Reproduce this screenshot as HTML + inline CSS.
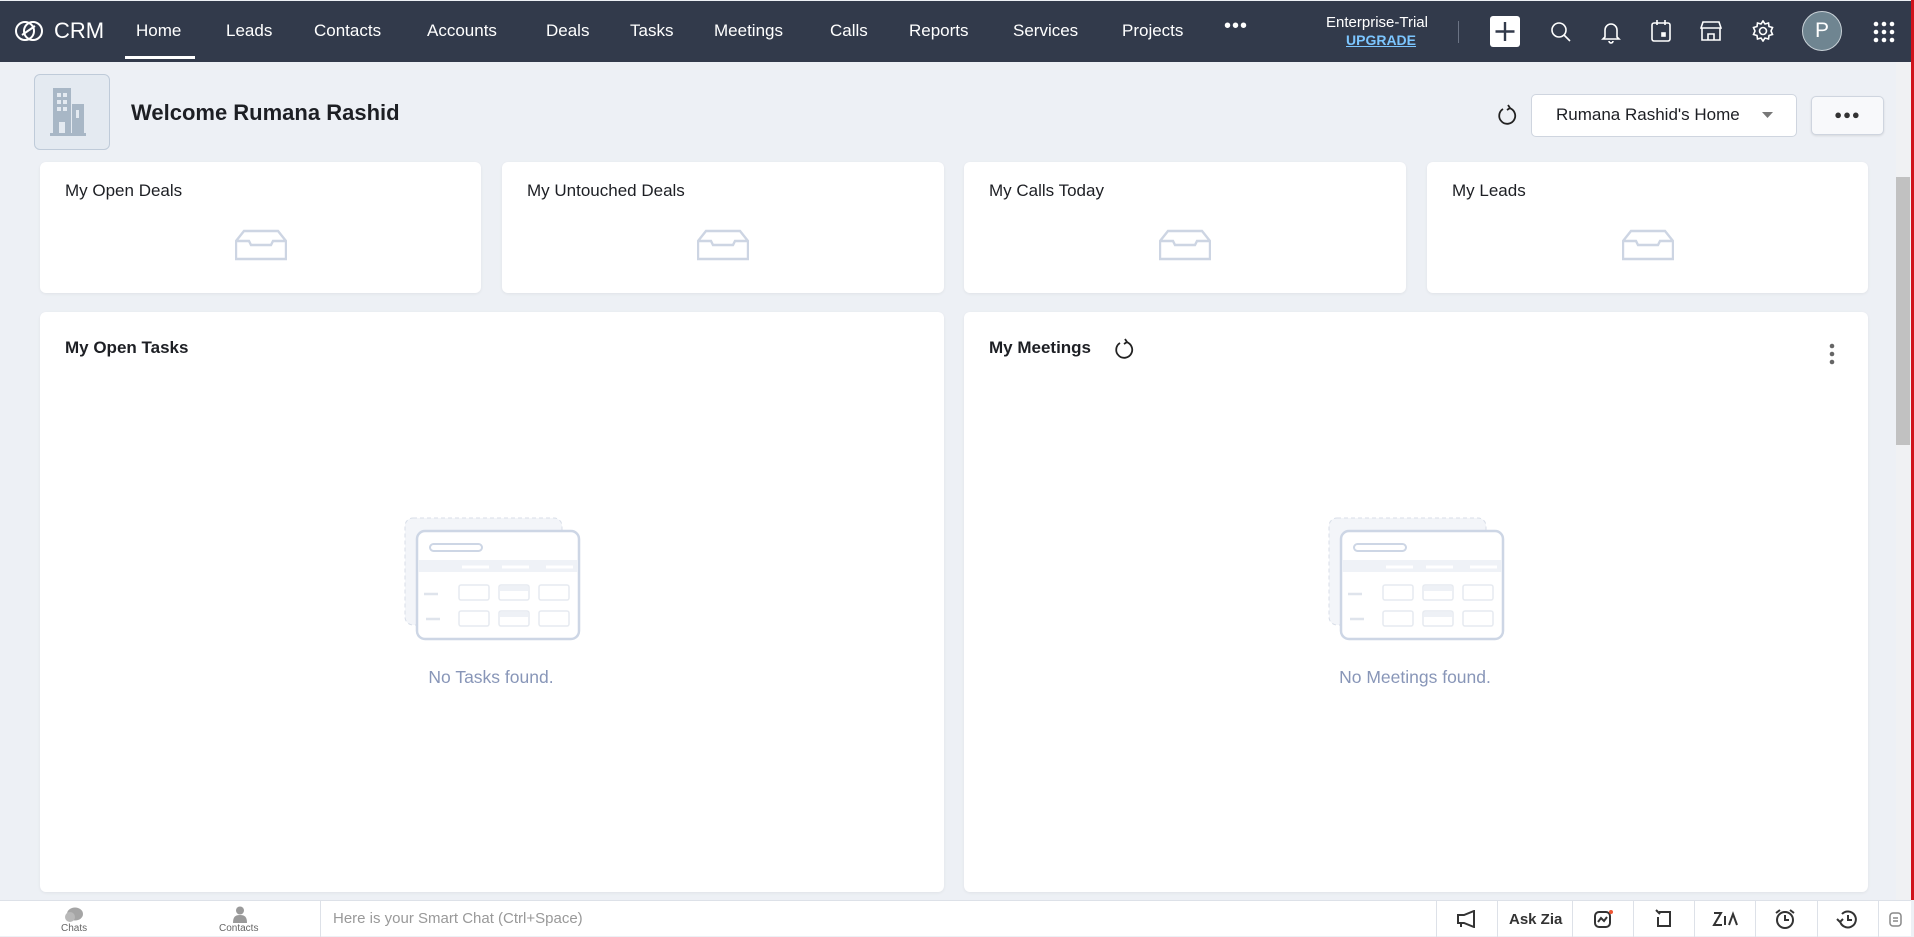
<!DOCTYPE html>
<html><head><meta charset="utf-8"><style>
*{box-sizing:border-box;margin:0;padding:0}
body{width:1914px;height:936px;overflow:hidden;font-family:"Liberation Sans",sans-serif;background:#edf0f5;position:relative;color:#1d1f24}
.top{position:absolute;left:0;top:1px;width:1911px;height:61px;background:#323a4b;color:#fff}
.top .t{position:absolute;top:20px;font-size:17px;color:#fff}
.ab{position:absolute}
.card{position:absolute;background:#fff;border-radius:6px;box-shadow:0 1px 3px rgba(0,0,0,.06)}
.card h3{position:absolute;left:25px;font-size:17px;font-weight:normal;color:#1d1f24}
.empty{position:absolute;font-size:17.5px;color:#8896b8;width:300px;text-align:center}
.bb{position:absolute;top:900px;left:0;width:1911px;height:36px;background:#fff;border-top:1px solid #dde1e8}
.div{position:absolute;top:0;width:1px;height:36px;background:#dde1e8}
</style></head><body>
<div class="top">
 <svg class="ab" style="left:14px;top:18px" width="30" height="24" viewBox="0 0 30 24" fill="none" stroke="#fff" stroke-width="2"><ellipse cx="11" cy="12" rx="9" ry="9"/><ellipse cx="19" cy="12" rx="9" ry="9"/><path d="M8 16 L21 7"/></svg>
 <div class="t" style="left:54px;top:17px;font-size:22px">CRM</div>
 <div class="t" style="left:136px">Home</div>
 <div class="ab" style="left:125px;top:55px;width:70px;height:3px;background:#fff"></div>
 <div class="t" style="left:226px">Leads</div>
 <div class="t" style="left:314px">Contacts</div>
 <div class="t" style="left:427px">Accounts</div>
 <div class="t" style="left:546px">Deals</div>
 <div class="t" style="left:630px">Tasks</div>
 <div class="t" style="left:714px">Meetings</div>
 <div class="t" style="left:830px">Calls</div>
 <div class="t" style="left:909px">Reports</div>
 <div class="t" style="left:1013px">Services</div>
 <div class="t" style="left:1122px">Projects</div>
 <div class="t" style="left:1224px;top:14px;font-size:20px;letter-spacing:1px">•••</div>
 <div class="ab" style="left:1326px;top:13px;font-size:15px">Enterprise-Trial</div>
 <div class="ab" style="left:1346px;top:31px;font-size:14px;font-weight:bold;color:#7cc6ff;text-decoration:underline">UPGRADE</div>
 <div class="ab" style="left:1458px;top:20px;width:1px;height:22px;background:#6b7384"></div>
 <div class="ab" style="left:1490px;top:15px;width:30px;height:31px;background:#fff;border-radius:3px"></div>
 <svg class="ab" style="left:1490px;top:15px" width="30" height="31"><path d="M15 6v19M5.5 15.5h19" stroke="#323a4b" stroke-width="2.4"/></svg>
 <svg class="ab" style="left:1550px;top:20px" width="22" height="22" fill="none" stroke="#fff" stroke-width="1.6"><circle cx="9" cy="9" r="7"/><path d="M14 14l6 6"/></svg>
 <svg class="ab" style="left:1601px;top:19px" width="20" height="24" fill="none" stroke="#fff" stroke-width="1.6"><path d="M4 17V10a6 6 0 0 1 12 0v7l2 2H2z M8 21a2 2 0 0 0 4 0"/></svg>
 <svg class="ab" style="left:1650px;top:18px" width="22" height="24" fill="none" stroke="#fff" stroke-width="1.6"><rect x="2" y="4" width="18" height="18" rx="2"/><path d="M7 1v5M15 1v5"/><rect x="12" y="14" width="3" height="3" fill="#fff"/></svg>
 <svg class="ab" style="left:1700px;top:19px" width="22" height="22" fill="none" stroke="#fff" stroke-width="1.6"><path d="M3 2h16l2 6H1z M2 8v12h18V8 M8 20v-6h6v6"/></svg>
 <svg class="ab" style="left:1752px;top:19px" width="22" height="22" fill="none" stroke="#fff" stroke-width="1.6"><circle cx="11" cy="11" r="3.5"/><path d="M11 1l2 3 3.5-1 .5 3.5 3.5 1-1.5 3.5 1.5 3.5-3.5 1-.5 3.5-3.5-1-2 3-2-3-3.5 1-.5-3.5-3.5-1L3 11 1.5 7.5l3.5-1 .5-3.5 3.5 1z"/></svg>
 <div class="ab" style="left:1802px;top:10px;width:40px;height:40px;border-radius:50%;background:#6f8591;border:1.5px solid #c9d2d8;color:#fff;font-size:21px;text-align:center;line-height:37px">P</div>
 <svg class="ab" style="left:1873px;top:20px" width="22" height="22" fill="#fff"><circle cx="3" cy="3" r="2.3"/><circle cx="11" cy="3" r="2.3"/><circle cx="19" cy="3" r="2.3"/><circle cx="3" cy="11" r="2.3"/><circle cx="11" cy="11" r="2.3"/><circle cx="19" cy="11" r="2.3"/><circle cx="3" cy="19" r="2.3"/><circle cx="11" cy="19" r="2.3"/><circle cx="19" cy="19" r="2.3"/></svg>
</div>
<div class="ab" style="left:1911px;top:0;width:3px;height:900px;background:#d0121b"></div>
<div class="ab" style="left:1896px;top:62px;width:15px;height:838px;background:#f0f1f3"></div>
<div class="ab" style="left:1896px;top:177px;width:14px;height:268px;background:#c1c1c1"></div>

<div class="ab" style="left:34px;top:74px;width:76px;height:76px;border:1px solid #bfcbd9;border-radius:6px;background:#e4eaf1"></div>
<svg class="ab" style="left:50px;top:88px" width="44" height="48" fill="#a8b7c6"><rect x="3" y="0" width="18" height="46"/><rect x="22" y="16" width="12" height="30"/><rect x="0" y="45" width="36" height="3"/><g fill="#e4eaf1"><rect x="7" y="5" width="4" height="4"/><rect x="13" y="5" width="4" height="4"/><rect x="7" y="12" width="4" height="4"/><rect x="13" y="12" width="4" height="4"/><rect x="7" y="19" width="4" height="4"/><rect x="13" y="19" width="4" height="4"/><rect x="9" y="34" width="6" height="11"/><rect x="26" y="22" width="3" height="8"/></g></svg>
<div class="ab" style="left:131px;top:100px;font-size:22px;font-weight:bold;color:#1d1f24">Welcome Rumana Rashid</div>

<svg class="ab" style="left:1496px;top:104px" width="22" height="24" fill="none" stroke="#222" stroke-width="1.8"><path d="M7 5a8 8 0 1 0 6-1"/><path d="M12 1l2 3-3 2"/></svg>
<div class="ab" style="left:1531px;top:94px;width:266px;height:43px;background:#fff;border:1px solid #cfd5df;border-radius:5px"></div>
<div class="ab" style="left:1556px;top:105px;font-size:17px">Rumana Rashid's Home</div>
<svg class="ab" style="left:1762px;top:112px" width="12" height="8"><path d="M0 0h11L5.5 6z" fill="#777"/></svg>
<div class="ab" style="left:1811px;top:96px;width:73px;height:39px;background:#f8f9fb;border:1px solid #cfd5df;border-radius:5px;box-shadow:0 1px 2px rgba(0,0,0,.1);text-align:center;font-size:13px;line-height:36px;letter-spacing:1px;color:#333">●●●</div>

<div class="card" style="left:40px;top:162px;width:441px;height:131px"><h3 style="top:19px">My Open Deals</h3></div>
<div class="card" style="left:502px;top:162px;width:442px;height:131px"><h3 style="top:19px">My Untouched Deals</h3></div>
<div class="card" style="left:964px;top:162px;width:442px;height:131px"><h3 style="top:19px">My Calls Today</h3></div>
<div class="card" style="left:1427px;top:162px;width:441px;height:131px"><h3 style="top:19px">My Leads</h3></div>
<svg class="ab" style="left:235px;top:229px" width="52" height="32" fill="none" stroke="#cdd5e3" stroke-width="2.4"><path d="M9 2h34l8 10v18H1V12z M1 12h13l2 4h20l2-4h13"/></svg>
<svg class="ab" style="left:697px;top:229px" width="52" height="32" fill="none" stroke="#cdd5e3" stroke-width="2.4"><path d="M9 2h34l8 10v18H1V12z M1 12h13l2 4h20l2-4h13"/></svg>
<svg class="ab" style="left:1159px;top:229px" width="52" height="32" fill="none" stroke="#cdd5e3" stroke-width="2.4"><path d="M9 2h34l8 10v18H1V12z M1 12h13l2 4h20l2-4h13"/></svg>
<svg class="ab" style="left:1622px;top:229px" width="52" height="32" fill="none" stroke="#cdd5e3" stroke-width="2.4"><path d="M9 2h34l8 10v18H1V12z M1 12h13l2 4h20l2-4h13"/></svg>

<div class="card" style="left:40px;top:312px;width:904px;height:580px"><h3 style="top:26px;font-weight:bold">My Open Tasks</h3></div>
<div class="card" style="left:964px;top:312px;width:904px;height:580px"><h3 style="top:26px;font-weight:bold">My Meetings</h3></div>
<svg class="ab" style="left:1113px;top:338px" width="22" height="24" fill="none" stroke="#222" stroke-width="1.8"><path d="M7 5a8 8 0 1 0 6-1"/><path d="M12 1l2 3-3 2"/></svg>
<svg class="ab" style="left:1829px;top:343px" width="6" height="22" fill="#666"><circle cx="3" cy="3" r="2.3"/><circle cx="3" cy="11" r="2.3"/><circle cx="3" cy="19" r="2.3"/></svg>

<svg class="ab" style="left:404px;top:517px" width="178" height="124" fill="none">
 <rect x="1" y="1" width="157" height="107" rx="8" stroke="#d8dee8" stroke-dasharray="4 3" fill="#f3f5f9"/>
 <rect x="13" y="14" width="162" height="108" rx="8" stroke="#cdd6e5" stroke-width="2.5" fill="#fff"/>
 <rect x="26" y="27" width="52" height="7" rx="3.5" stroke="#cdd6e5" stroke-width="2"/>
 <rect x="14" y="43" width="160" height="12" fill="#eff2f7"/>
 <path d="M58 50h27M98 50h27M142 50h27" stroke="#fff" stroke-width="3"/>
 <path d="M20 77h14M22 102h14" stroke="#dfe4ec" stroke-width="2.5"/>
 <g stroke="#e6eaf0" stroke-width="1.5"><rect x="55" y="68" width="30" height="15" rx="2"/><rect x="95" y="68" width="30" height="15" rx="2"/><rect x="135" y="68" width="30" height="15" rx="2"/><rect x="55" y="94" width="30" height="15" rx="2"/><rect x="95" y="94" width="30" height="15" rx="2"/><rect x="135" y="94" width="30" height="15" rx="2"/></g>
 <rect x="96" y="95" width="28" height="5" fill="#eef1f6"/><rect x="96" y="69" width="28" height="5" fill="#eef1f6"/>
</svg>
<svg class="ab" style="left:1328px;top:517px" width="178" height="124" fill="none">
 <rect x="1" y="1" width="157" height="107" rx="8" stroke="#d8dee8" stroke-dasharray="4 3" fill="#f3f5f9"/>
 <rect x="13" y="14" width="162" height="108" rx="8" stroke="#cdd6e5" stroke-width="2.5" fill="#fff"/>
 <rect x="26" y="27" width="52" height="7" rx="3.5" stroke="#cdd6e5" stroke-width="2"/>
 <rect x="14" y="43" width="160" height="12" fill="#eff2f7"/>
 <path d="M58 50h27M98 50h27M142 50h27" stroke="#fff" stroke-width="3"/>
 <path d="M20 77h14M22 102h14" stroke="#dfe4ec" stroke-width="2.5"/>
 <g stroke="#e6eaf0" stroke-width="1.5"><rect x="55" y="68" width="30" height="15" rx="2"/><rect x="95" y="68" width="30" height="15" rx="2"/><rect x="135" y="68" width="30" height="15" rx="2"/><rect x="55" y="94" width="30" height="15" rx="2"/><rect x="95" y="94" width="30" height="15" rx="2"/><rect x="135" y="94" width="30" height="15" rx="2"/></g>
 <rect x="96" y="95" width="28" height="5" fill="#eef1f6"/><rect x="96" y="69" width="28" height="5" fill="#eef1f6"/>
</svg>
<div class="empty" style="left:341px;top:667px">No Tasks found.</div>
<div class="empty" style="left:1265px;top:667px">No Meetings found.</div>

<div class="bb">
 <svg class="ab" style="left:64px;top:6px" width="20" height="16" fill="#a5a5a5"><ellipse cx="11" cy="7" rx="8" ry="6.5"/><ellipse cx="6" cy="10" rx="5" ry="5" fill="#b9b9b9"/></svg>
 <div class="ab" style="left:61px;top:22px;font-size:10px;color:#666">Chats</div>
 <svg class="ab" style="left:232px;top:5px" width="16" height="17" fill="#9a9a9a"><circle cx="8" cy="4.5" r="4"/><path d="M1 17c0-6 2-8 7-8s7 2 7 8z"/></svg>
 <div class="ab" style="left:219px;top:22px;font-size:10px;color:#666">Contacts</div>
 <div class="div" style="left:320px"></div>
 <div class="ab" style="left:333px;top:9px;font-size:15px;color:#999">Here is your Smart Chat (Ctrl+Space)</div>
 <div class="div" style="left:1436px"></div><div class="div" style="left:1497px"></div><div class="div" style="left:1572px"></div><div class="div" style="left:1633px"></div><div class="div" style="left:1694px"></div><div class="div" style="left:1755px"></div><div class="div" style="left:1817px"></div><div class="div" style="left:1878px"></div>
 <svg class="ab" style="left:1456px;top:9px" width="22" height="18" fill="none" stroke="#333" stroke-width="2"><path d="M2 5h6l10-4v16L8 13H2z M5 13v4"/></svg>
 <div class="ab" style="left:1509px;top:10px;font-size:15px;font-weight:bold;color:#333">Ask Zia</div>
 <svg class="ab" style="left:1593px;top:8px" width="22" height="20" fill="none" stroke="#333" stroke-width="2"><rect x="2" y="3" width="15" height="15" rx="4"/><path d="M5 13l3-4 3 3 3-4"/><circle cx="18" cy="3" r="2" fill="#e53" stroke="none"/></svg>
 <svg class="ab" style="left:1654px;top:8px" width="20" height="20" fill="none" stroke="#333" stroke-width="2"><path d="M5 3h11v14H4V8 M2 1l4 4"/></svg>
 <svg class="ab" style="left:1712px;top:9px" width="26" height="18" fill="none" stroke="#333" stroke-width="2"><path d="M2 3h7L2 15h8 M13 6v9 M17 15l4-11 4 11"/></svg>
 <svg class="ab" style="left:1774px;top:7px" width="22" height="22" fill="none" stroke="#333" stroke-width="2"><circle cx="11" cy="12" r="8"/><path d="M11 7v5h4 M2 5l4-3 M20 5l-4-3"/></svg>
 <svg class="ab" style="left:1836px;top:7px" width="22" height="22" fill="none" stroke="#333" stroke-width="2"><path d="M4 13a8 8 0 1 0 2-7 M1 11l3 3 3-3 M12 7v5h4"/></svg>
 <svg class="ab" style="left:1887px;top:9px" width="16" height="18" fill="none" stroke="#888" stroke-width="1.5"><rect x="3" y="3" width="11" height="13" rx="3"/><path d="M6 8h5M6 11h5"/></svg>
</div>
</body></html>
